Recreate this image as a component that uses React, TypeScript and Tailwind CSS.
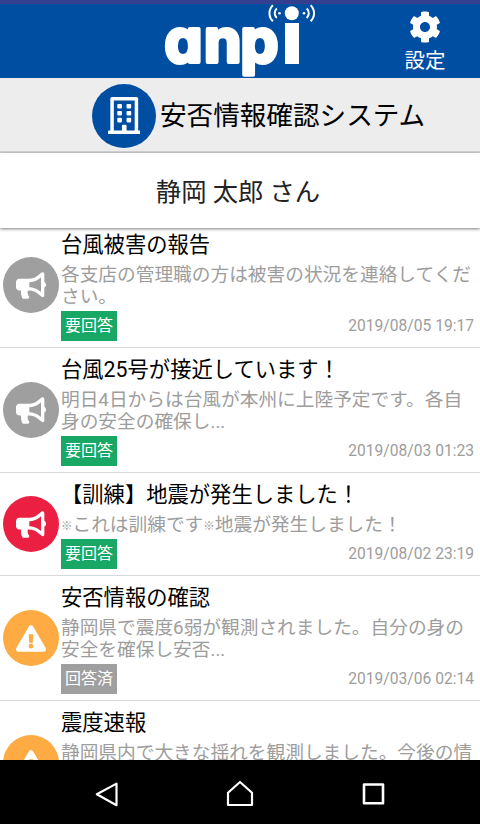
import { FaBullhorn, FaCog, FaExclamationTriangle, FaRegBuilding } from "react-icons/fa";

type Notice = {
  title: string;
  body: string[];
  date?: string;
  status?: string;
  kind: "news" | "alert" | "warning";
};

const notices: Notice[] = [
  {
    title: "台風被害の報告",
    body: ["各支店の管理職の方は被害の状況を連絡してくだ", "さい。"],
    date: "2019/08/05 19:17",
    status: "要回答",
    kind: "news",
  },
  {
    title: "台風25号が接近しています！",
    body: ["明日4日からは台風が本州に上陸予定です。各自", "身の安全の確保し..."],
    date: "2019/08/03 01:23",
    status: "要回答",
    kind: "news",
  },
  {
    title: "【訓練】地震が発生しました！",
    body: ["※これは訓練です※地震が発生しました！"],
    date: "2019/08/02 23:19",
    status: "要回答",
    kind: "alert",
  },
  {
    title: "安否情報の確認",
    body: ["静岡県で震度6弱が観測されました。自分の身の", "安全を確保し安否..."],
    date: "2019/03/06 02:14",
    status: "回答済",
    kind: "warning",
  },
  {
    title: "震度速報",
    body: ["静岡県内で大きな揺れを観測しました。今後の情", ""],
    kind: "warning",
  },
];

const circleColor = {
  news: "bg-[#9f9f9f]",
  alert: "bg-[#ea1f41]",
  warning: "bg-[#ffab43]",
};

function Logo() {
  return (
    <svg width="160" height="78" viewBox="0 0 160 78" className="block">
      <text
        x="4.5 44 80.5 124"
        y="62"
        fill="#fff"
        stroke="#fff"
        strokeWidth="4"
        strokeLinejoin="round"
        fontFamily="Inter"
        fontWeight="700"
        fontSize="60"
        style={{ fontFeatureSettings: "'cv11' 1" }}
      >
        anpi
      </text>
      {/* stem and dot of the i with the radio waves */}
      <rect x="122" y="4" width="24" height="60" fill="#004ea2" />
      <rect x="125" y="23" width="14" height="41" fill="#fff" />
      <circle cx="131.8" cy="13.3" r="7" fill="#fff" />
      <circle cx="119.5" cy="13.2" r="1.3" fill="#fff" />
      <circle cx="144" cy="13.2" r="1.3" fill="#fff" />
      <g fill="none" stroke="#fff" strokeWidth="2">
        <path d="M116.8 8.4a6.5 6.5 0 0 0 0 9.6M112.9 5.2a11 11 0 0 0 0 16" />
        <path d="M146.7 8.4a6.5 6.5 0 0 1 0 9.6M150.6 5.2a11 11 0 0 1 0 16" />
      </g>
    </svg>
  );
}

// ※ takes a narrow cell in the body text
function BodyLine({ text }: { text: string }) {
  return (
    <p className="h-[22px]">
      {text.split(/(※)/).map((part, i) =>
        part === "※" ? (
          <span key={i} className="inline-block w-[11.5px] align-[1.5px] text-[11.5px] leading-none">
            ※
          </span>
        ) : (
          part
        )
      )}
    </p>
  );
}

function NoticeRow({ item }: { item: Notice }) {
  return (
    <li className="flex items-center border-b border-[#d9d9d9] pl-[2.5px] pr-[6px] pt-[10px] pb-[6px]">
      <div className={`mb-[4px] flex size-14 shrink-0 items-center justify-center rounded-full text-white ${circleColor[item.kind]}`}>
        {item.kind === "warning" ? (
          <FaExclamationTriangle className="h-[27px] w-[30px]" />
        ) : (
          <FaBullhorn className="h-[27px] w-[30px]" />
        )}
      </div>
      <div className="ml-[2.5px] min-w-0 flex-1">
        <h2 className="text-[21.3px] leading-[24px] whitespace-nowrap text-black">{item.title}</h2>
        <div className="mt-[7px] text-[18.7px] leading-[22px] whitespace-nowrap text-[#9d9d9d]">
          {item.body.map((line) => (
            <BodyLine key={line} text={line} />
          ))}
        </div>
        <div className="mt-[3px] flex h-[30px] items-center justify-between">
          {item.status && (
            <span
              className={`flex h-[30px] w-14 items-center justify-center text-[16px] leading-none text-white ${
                item.status === "回答済" ? "bg-[#9f9f9f]" : "bg-[#18a765]"
              }`}
            >
              {item.status}
            </span>
          )}
          {item.date && <time className="pt-[2px] text-[15.6px] text-[#9d9d9d]">{item.date}</time>}
        </div>
      </div>
    </li>
  );
}

export default function App() {
  return (
    <div className="flex h-[824px] w-[480px] flex-col overflow-hidden bg-white font-[Roboto,'Noto_Sans_CJK_JP',sans-serif]">
      <div className="h-[4px] shrink-0 bg-[#34408f]" />
      <header className="relative h-[74px] shrink-0 bg-[#004ea2]">
        <div className="absolute -top-[4px] left-[160px]">
          <Logo />
        </div>
        <button className="ml-auto mr-[24px] flex w-[62px] flex-col items-center pt-[7px] text-white">
          <FaCog className="size-[32px]" />
          <span className="mt-[5px] text-[20.5px] leading-[26px]">設定</span>
        </button>
      </header>

      <div className="flex h-[75px] shrink-0 items-center border-b-2 border-[#d2d2d2] bg-[#ededed] pl-[92px] pt-[2px]">
        <div className="flex size-16 items-center justify-center rounded-full bg-[#004ea2] text-white">
          <FaRegBuilding className="h-[37px] w-[32.5px]" />
        </div>
        <h1 className="ml-[4px] pt-[2px] text-[26.6px] leading-none whitespace-nowrap text-black">安否情報確認システム</h1>
      </div>

      <div className="z-10 flex h-[75px] shrink-0 items-center justify-center bg-white pt-[4px] pr-[4px] text-[25.3px] text-[#222] shadow-[0_1px_3px_rgba(0,0,0,0.5)]">
        静岡 太郎 さん
      </div>

      {/* list is scrolled a few px under the name bar */}
      <main className="min-h-0 flex-1 overflow-hidden">
        <ul className="-mt-[5px]">
          {notices.map((item) => (
            <NoticeRow key={item.title} item={item} />
          ))}
        </ul>
      </main>

      <nav className="flex h-16 shrink-0 items-center justify-around bg-black px-[40px]">
        <svg width="30" height="30" viewBox="0 0 30 30" fill="none" stroke="#fff" strokeWidth="2.2" strokeLinejoin="round">
          <path d="M4.8 17.3 24.5 6.6v21.6z" />
        </svg>
        <svg width="30" height="30" viewBox="0 0 30 30" fill="none" stroke="#fff" strokeWidth="2.2" strokeLinejoin="round">
          <path d="M3 28V15.8L15 5l12 10.8V28z" />
        </svg>
        <svg width="30" height="30" viewBox="0 0 30 30" fill="none" stroke="#fff" strokeWidth="2.6" strokeLinejoin="round">
          <path d="M6 7.5h19v18.8h-19z" />
        </svg>
      </nav>
    </div>
  );
}
